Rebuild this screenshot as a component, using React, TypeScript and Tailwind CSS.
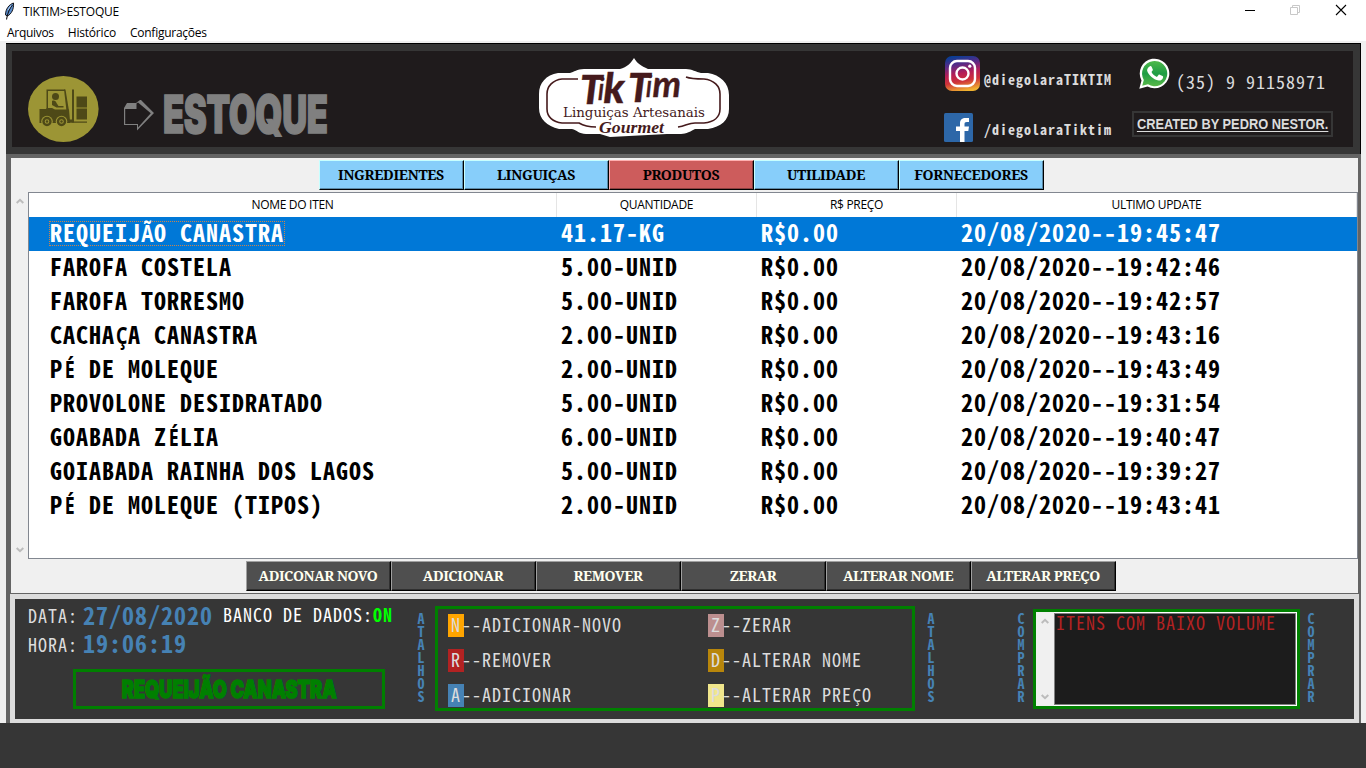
import React from "react";

const mono = "font-['Noto_Sans_Mono_CJK_JP','Liberation_Mono',monospace]";
const ui = "font-['Open_Sans',sans-serif]";
const serif = "font-['Noto_Serif','Liberation_Serif',serif]";
const heavy = "font-['Inter',sans-serif] font-black";

const tabs = ["INGREDIENTES", "LINGUIÇAS", "PRODUTOS", "UTILIDADE", "FORNECEDORES"];
const actions = ["ADICONAR NOVO", "ADICIONAR", "REMOVER", "ZERAR", "ALTERAR NOME", "ALTERAR PREÇO"];
const rows = [
  ["REQUEIJÃO CANASTRA", "41.17-KG", "R$0.00", "20/08/2020--19:45:47"],
  ["FAROFA COSTELA", "5.00-UNID", "R$0.00", "20/08/2020--19:42:46"],
  ["FAROFA TORRESMO", "5.00-UNID", "R$0.00", "20/08/2020--19:42:57"],
  ["CACHAÇA CANASTRA", "2.00-UNID", "R$0.00", "20/08/2020--19:43:16"],
  ["PÉ DE MOLEQUE", "2.00-UNID", "R$0.00", "20/08/2020--19:43:49"],
  ["PROVOLONE DESIDRATADO", "5.00-UNID", "R$0.00", "20/08/2020--19:31:54"],
  ["GOABADA ZÉLIA", "6.00-UNID", "R$0.00", "20/08/2020--19:40:47"],
  ["GOIABADA RAINHA DOS LAGOS", "5.00-UNID", "R$0.00", "20/08/2020--19:39:27"],
  ["PÉ DE MOLEQUE (TIPOS)", "2.00-UNID", "R$0.00", "20/08/2020--19:43:41"],
];
const shortcuts = [
  [
    { k: "N", bg: "bg-[#ffa500]", label: "--ADICIONAR-NOVO" },
    { k: "R", bg: "bg-[#b22222]", label: "--REMOVER" },
    { k: "A", bg: "bg-[#4682b4]", label: "--ADICIONAR" },
  ],
  [
    { k: "Z", bg: "bg-[#bc8f8f]", label: "--ZERAR" },
    { k: "D", bg: "bg-[#b8860b]", label: "--ALTERAR NOME" },
    { k: "P", bg: "bg-[#f0e68c]", label: "--ALTERAR PREÇO" },
  ],
];

/* Monospaced text whose accented letters are condensed into one character cell. */
function MonoText({ text, cell }: { text: string; cell: string }) {
  return (
    <>
      {text.split(/([ÃÇÉ])/).map((part, i) =>
        i % 2 === 1 ? (
          <span key={i} className={`inline-flex justify-center font-['Noto_Sans',sans-serif] leading-[0] tracking-normal ${cell}`}>
            <span className="scale-x-[.74]">{part}</span>
          </span>
        ) : (
          part
        ),
      )}
    </>
  );
}

function Feather() {
  return (
    <svg width="12" height="18" viewBox="0 0 12 18">
      <path d="M9.5 1C5 2.5 1.5 7 1.5 13l2 1C7.500 12 10 7 9.500 1Z" fill="#5b8fd0" stroke="#17171c" strokeWidth="1" />
      <path d="M8.500 3C5 7 3.500 11 2.500 17.500" stroke="#101014" strokeWidth="1.100" fill="none" />
      <path d="M7 3.500 4 8" stroke="#b7d3f5" strokeWidth="1" />
    </svg>
  );
}

function Forklift() {
  return (
    <svg width="72" height="68" viewBox="0 0 72 68">
      <ellipse cx="35.300" cy="34" rx="35.300" ry="33" fill="#9c9535" />
      <g fill="#4e4917">
        <path d="M18.500 14.500h18.500v1.500H20v18h-1.500Z" />
        <path d="M36 14.500h1.500L41 36h-2.500Z" />
        <circle cx="27.500" cy="21.500" r="3.500" />
        <path d="M24 26c2-1 4 0 4.500 2l2 3h5v1.500h-7L24 30Z" />
        <path d="M11.500 34h6.500l1-1h5l3 1.500h14L42 46v2H11.500Z" />
        <path d="M44 14.500h2v33h-2Z" />
        <path d="M48.500 21.500h10.500v11H48.500ZM48.500 33.500h10.500v11H48.500Z" />
        <path d="M38 44.500h7v2h14v1.200H38Z" />
      </g>
      <g fill="#9c9535" stroke="#4e4917">
        <circle cx="19" cy="46.500" r="5.800" fill="#9c9535" stroke="none" />
        <circle cx="33.500" cy="46.500" r="5.800" fill="#9c9535" stroke="none" />
        <circle cx="19" cy="46.500" r="3.500" strokeWidth="2.400" />
        <circle cx="33.500" cy="46.500" r="3.500" strokeWidth="2.400" />
      </g>
      <g fill="#4e4917">
        <circle cx="19" cy="46.500" r="1.200" />
        <circle cx="33.500" cy="46.500" r="1.200" />
      </g>
    </svg>
  );
}

function BlockArrow() {
  return (
    <svg width="31" height="32" viewBox="0 0 31 32">
      <path d="M0 9 3 4h9l4-3h1l13 13L13 31.500V26H0Z" fill="#808080" />
      <path d="M1.200 10h11.300V4.500l1.500-1L26.800 14.300 14 28.500V25H1.200Z" fill="#1f1b1c" />
    </svg>
  );
}

function Logo() {
  return (
    <svg width="192" height="82" viewBox="0 0 192 82">
      <path
        d="M95 1C98 6 102 9 109 12L147 12C153 12 157 15 162 16L169 16C181 18 190 26 190 38V52C190 63 182 70 169 72H156C149 76 146 77 140 77H128L71 80L61 77H47C40 77 38 73 33 72H20C8 69 0 62 0 51V37C0 26 7 18 19 16H31C35 15 38 12 45 12H81C88 10 92 6 95 1Z"
        fill="#fff"
      />
      <g fill="none" stroke="#451a1c" strokeWidth="1.600">
        <path d="M39 22H23C14 23 8 29 8 37V52C8 60 14 65 23 66H40C45 69 50 70 57 70" />
        <path d="M147 20C152 22 157 22 165 22C175 23 181 29 181 37V52C181 60 175 65 165 66H156C149 66 147 69 139 70" />
      </g>
      <g fill="#451a1c" stroke="#451a1c" fontFamily="Lato" fontStyle="italic">
        <text x="41" y="47" fontWeight="900" strokeWidth=".4" fontSize="40">
          T<tspan dx="-5" dy="-4" fontSize="31" fontWeight="400">i</tspan><tspan dx="-1" dy="3" fontSize="41" fontWeight="900">k</tspan>
        </text>
        <text x="89" y="45" fontWeight="900" strokeWidth=".4" fontSize="40">
          T<tspan dx="-5" dy="-5" fontSize="30" fontWeight="400">i</tspan><tspan dx="0" dy="0" fontSize="36" fontWeight="700">m</tspan>
        </text>
        <text x="24" y="60" fontStyle="normal" fontFamily="DejaVu Serif" fontSize="13.500" strokeWidth="0" textLength="142" lengthAdjust="spacingAndGlyphs">Linguiças Artesanais</text>
        <text x="60" y="76" fontFamily="Liberation Serif" fontWeight="700" fontSize="16" strokeWidth="0" textLength="65" lengthAdjust="spacingAndGlyphs">Gourmet</text>
      </g>
    </svg>
  );
}

function InstagramIcon() {
  return (
    <svg width="35" height="35" viewBox="0 0 35 35">
      <defs>
        <linearGradient id="ig" x1=".35" y1="0" x2=".55" y2="1">
          <stop offset="0" stopColor="#0a3d94" />
          <stop offset=".25" stopColor="#5b2a86" />
          <stop offset=".5" stopColor="#b61f56" />
          <stop offset=".72" stopColor="#cf3339" />
          <stop offset="1" stopColor="#efb22f" />
        </linearGradient>
      </defs>
      <rect width="35" height="35" rx="7" fill="url(#ig)" />
      <rect x="5" y="5" width="25" height="25" rx="7" fill="none" stroke="#fff" strokeWidth="2.400" />
      <circle cx="17.500" cy="17.500" r="6" fill="none" stroke="#fff" strokeWidth="2.400" />
      <circle cx="24.800" cy="10.200" r="1.600" fill="#fff" />
    </svg>
  );
}

function FacebookIcon() {
  return (
    <svg width="29" height="29" viewBox="0 0 29 29">
      <rect width="29" height="29" rx="1.500" fill="#2d67a8" />
      <path d="M16 29V18h-4v-4.500h4v-3C16 6.500 18.300 5 21.500 5H25v4h-2.200c-1.800 0-2.300.8-2.300 2.200v2.300H25L24.300 18h-3.800v11Z" fill="#fff" />
    </svg>
  );
}

function WhatsAppIcon() {
  return (
    <svg width="31" height="31" viewBox="0 0 31 31">
      <defs>
        <linearGradient id="wa" x1="0" y1="0" x2="0" y2="1">
          <stop offset="0" stopColor="#4fb94b" />
          <stop offset=".5" stopColor="#1f9d45" />
          <stop offset="1" stopColor="#58b848" />
        </linearGradient>
      </defs>
      <path d="M.3 30.700 2.500 22.500A14.800 14.800 0 1 1 8.500 28.500Z" fill="#fff" />
      <path d="M3.200 27.800 4.800 22A12.600 12.600 0 1 1 9 26.300Z" fill="url(#wa)" />
      <path d="M11 8.200c.7-.3 1.400 0 1.700.8l1.100 2.600c.2.600-.2 1.200-1.300 2.400 1.300 2.400 3 3.900 5.400 4.900l1.600-1.900c.4-.4.700-.5 1.200-.3l2.800 1.400c.7.300.7.700.5 1.600-.5 2-2.300 3-4.300 2.800-5.500-.8-10.500-5.700-11.600-10 0-1.900 1.300-3.700 2.900-4.300Z" fill="#fff" />
    </svg>
  );
}

function Chevron({ down = false }: { down?: boolean }) {
  return (
    <svg width="8" height="6" viewBox="0 0 8 6" className={down ? "rotate-180" : ""}>
      <path d="M.7 5 4 1.800 7.300 5" fill="none" stroke="#bcbcbc" strokeWidth="2" />
    </svg>
  );
}

function VerticalWord({ word }: { word: string }) {
  return (
    <div className={`${mono} w-[10px] text-[14px] leading-[10px] font-bold tracking-[-1px] whitespace-nowrap text-[#4682b4] [text-orientation:upright] [writing-mode:vertical-rl]`}>
      {word}
    </div>
  );
}

function TitleBar() {
  return (
    <header className={`${ui} h-[41px] bg-white text-[12px] text-black`}>
      <div className="flex h-[22px] items-center pl-[4px]">
        <Feather />
        <span className="mt-[2px] ml-[7px] tracking-[-0.2px]">TIKTIM&gt;ESTOQUE</span>
        <svg className="mb-[2px] ml-auto mr-[18px]" width="104" height="12" viewBox="0 0 104 12" fill="none">
          <path d="M1 6.500h10" stroke="#000" />
          <path d="M46.500 3.500h7v7h-7ZM48.500 3V1.500h7v7h-2" stroke="#c8c8c8" />
          <path d="m92 1 10 10M102 1 92 11" stroke="#000" strokeWidth="1.100" />
        </svg>
      </div>
      <nav className="flex h-[19px] items-center gap-[14px] pt-[3px] pl-[7px]">
        <span className="tracking-[-0.3px]">Arquivos</span>
        <span className="tracking-[-0.2px]">Histórico</span>
        <span className="tracking-[-0.25px]">Configurações</span>
      </nav>
    </header>
  );
}

function Banner() {
  return (
    <section className="h-[111px] border-t border-r border-black bg-[#363636] pt-[7px] pr-[7px] pl-[6px]">
      <div className="flex h-[96px] bg-[#1f1b1c] text-[#dcdcdc]">
        <div className="flex w-[527px] pl-[16px]">
          <div className="pt-[24px]"><Forklift /></div>
          <div className="pt-[48px] pl-[24px]"><BlockArrow /></div>
          <h1 className={`${heavy} mt-[38px] ml-[8px] origin-left scale-x-[.665] text-[52px] leading-[52px] tracking-[-0.5px] text-[#808080] [-webkit-text-stroke:1.5px_#808080]`}>ESTOQUE</h1>
        </div>
        <div className="w-[405px] pt-[6px]"><Logo /></div>
        <div className="flex w-[194px] flex-col gap-[22px] pt-[5px]">
          <div className="flex h-[35px] pl-px">
            <InstagramIcon />
            <span className={`${mono} ml-[4px] pt-[13px] text-[14px] leading-[20px] font-bold tracking-[1px] whitespace-nowrap`}>@diegolaraTIKTIM</span>
          </div>
          <div className="flex h-[29px]">
            <FacebookIcon />
            <span className={`${mono} ml-[11px] pt-[6px] text-[14px] leading-[20px] font-bold tracking-[1px] whitespace-nowrap`}>/diegolaraTiktim</span>
          </div>
        </div>
        <div className="pt-[7px]">
          <div className="flex h-[53px] pl-px">
            <WhatsAppIcon />
            <span className={`${mono} ml-[6px] pt-[12px] text-[18px] leading-[23px] tracking-[1px] whitespace-nowrap`}>(35) 9 91158971</span>
          </div>
          <div className="flex h-[26px] w-[201px] -translate-x-[6px] items-center justify-center border-2 border-[#363636] font-['Liberation_Sans',sans-serif] text-[14px] font-bold whitespace-nowrap underline underline-offset-2">
            <span className="scale-x-[.915]">CREATED BY PEDRO NESTOR.</span>
          </div>
        </div>
      </div>
    </section>
  );
}

function Stock() {
  const grid = "grid grid-cols-[528px_200px_200px_400px]";
  return (
    <section className="h-[440px] border-t-4 border-r-[3px] border-b border-l-[5px] border-[#646464] bg-[#f0f0f0]">
      <div className="flex pt-[2px] pl-[308px]">
        {tabs.map((t) => (
          <button
            key={t}
            className={`${serif} h-[30px] w-[145px] border border-r-black border-b-black pr-px pb-[2px] text-[14px] font-bold tracking-[-0.3px] text-black ${
              t === "PRODUTOS"
                ? "border-t-[#ffb0b0] border-l-[#ffb0b0] bg-[#cd5c5c] shadow-[inset_-1px_-1px_0_#8a3f3f]"
                : "border-t-[#c8ffff] border-l-[#c8ffff] bg-[#87cefa] shadow-[inset_-1px_-1px_0_#5a8aa8]"
            }`}
          >
            {t}
          </button>
        ))}
      </div>
      <div className="mt-[2px] flex h-[367px]">
        <div className="flex w-[17px] flex-col items-center justify-between py-[6px]">
          <Chevron />
          <Chevron down />
        </div>
        <div className="w-[1330px] border border-[#828790] bg-white">
          <div className={`${grid} ${ui} h-[24px] text-center text-[12px] leading-[23px] tracking-[-0.3px] text-black`}>
            {["NOME DO ITEN", "QUANTIDADE", "R$ PREÇO", "ULTIMO UPDATE"].map((h) => (
              <div key={h} className="border-r border-[#e5e5e5]">{h}</div>
            ))}
          </div>
          {rows.map((r, i) => (
            <div
              key={r[0]}
              className={`${grid} ${mono} h-[34px] text-[24px] leading-[29px] font-bold tracking-[1px] whitespace-pre ${i === 0 ? "bg-[#0078d7] text-white" : "text-black"}`}
            >
              <div className="flex items-start pt-[4px] pl-[20px]">
                <span className={`h-[25px] border border-dotted leading-[19px] ${i === 0 ? "border-[#ff8728]/80" : "border-transparent"}`}>
                  <MonoText text={r[0]} cell="w-[13px]" />
                </span>
              </div>
              <div className="pl-[4px]">{r[1]}</div>
              <div className="pl-[4px]">{r[2]}</div>
              <div className="pl-[4px]">{r[3]}</div>
            </div>
          ))}
        </div>
      </div>
      <div className="flex pt-[2px] pl-[235px]">
        {actions.map((a) => (
          <button
            key={a}
            className={`${serif} h-[30px] w-[145px] border border-t-[#a0a0a0] border-r-black border-b-black border-l-[#a0a0a0] bg-[#4f4f4f] pr-px pb-[2px] text-[14px] font-bold tracking-[-0.45px] text-[#fffff0] shadow-[inset_-1px_-1px_0_#303030]`}
          >
            {a}
          </button>
        ))}
      </div>
    </section>
  );
}

function StatusPanel() {
  return (
    <section className="h-[129px] border-r-2 border-l-4 border-[#646464] bg-[#dcdcdc] pt-[5px] pr-[5px] pl-[5px]">
      <div className={`${mono} flex h-[120px] bg-[#363636] text-[18px] tracking-[1px] text-[#dcdcdc]`}>
        <div className="w-[401px] pl-[13px] whitespace-nowrap">
          <div className="flex h-[31px] items-center pt-[3px]">
            <span className="mb-[3px] w-[55px] leading-[26px]">DATA:</span>
            <span className="mb-[2px] w-[140px] text-[24px] leading-[30px] font-bold text-[#4682b4]">27/08/2020</span>
            <span className="mb-[4px] leading-[26px] text-white">BANCO DE DADOS:</span>
            <span className="mb-[4px] leading-[26px] font-bold text-[#00ff00]">ON</span>
          </div>
          <div className="flex h-[28px] items-center">
            <span className="w-[55px] leading-[26px]">HORA:</span>
            <span className="mb-[2px] text-[24px] leading-[28px] font-bold text-[#4682b4]">19:06:19</span>
          </div>
          <div className={`${heavy} mt-[11px] ml-[45px] flex h-[40px] w-[312px] items-center justify-center border-[3px] border-[#008000] text-[24px] tracking-normal text-[#008000]`}>
            <span className="scale-x-[.755] pt-px [-webkit-text-stroke:1.5px_#008000]">REQUEIJÃO CANASTRA</span>
          </div>
        </div>
        <div className="w-[19px] pt-[13px]"><VerticalWord word="ATALHOS" /></div>
        <div className="mt-[7px] flex h-[105px] w-[480px] border-[3px] border-[#008000] pt-[5px] pl-[10px]">
          {shortcuts.map((col, i) => (
            <div key={i} className="flex w-[260px] shrink-0 flex-col gap-[12px] whitespace-nowrap">
              {col.map((s) => (
                <div key={s.k} className="flex h-[23px] leading-[21px]">
                  <span className={`w-[16px] text-center ${s.bg}`}>{s.k}</span>
                  <span className="-ml-[2px]"><MonoText text={s.label} cell="w-[10px]" /></span>
                </div>
              ))}
            </div>
          ))}
        </div>
        <div className="w-[102px] pt-[13px] pl-[11px]"><VerticalWord word="ATALHOS" /></div>
        <div className="w-[16px] pt-[13px]"><div className="-ml-px"><VerticalWord word="COMPRAR" /></div></div>
        <div className="mt-[10px] flex h-[100px] w-[267px] border-[3px] border-[#008000] bg-white">
          <div className="flex w-[18px] flex-col items-center justify-between bg-[#f0f0f0] py-[6px]">
            <Chevron />
            <Chevron down />
          </div>
          <div className="m-px mr-px ml-0 flex-1 border border-[#808080] bg-[#1c1c1c] pl-px leading-[16px] whitespace-nowrap text-[#b22222]">ITENS COM BAIXO VOLUME</div>
        </div>
        <div className="pt-[13px] pl-[6px]"><VerticalWord word="COMPRAR" /></div>
      </div>
    </section>
  );
}

export default function App() {
  return (
    <div className="h-[768px] w-[1366px] overflow-hidden bg-[#363636]">
      <TitleBar />
      <main className="h-[682px] bg-[#f0f0f0] pt-[2px] pr-[5px] pl-[6px]">
        <Banner />
        <Stock />
        <StatusPanel />
      </main>
    </div>
  );
}
